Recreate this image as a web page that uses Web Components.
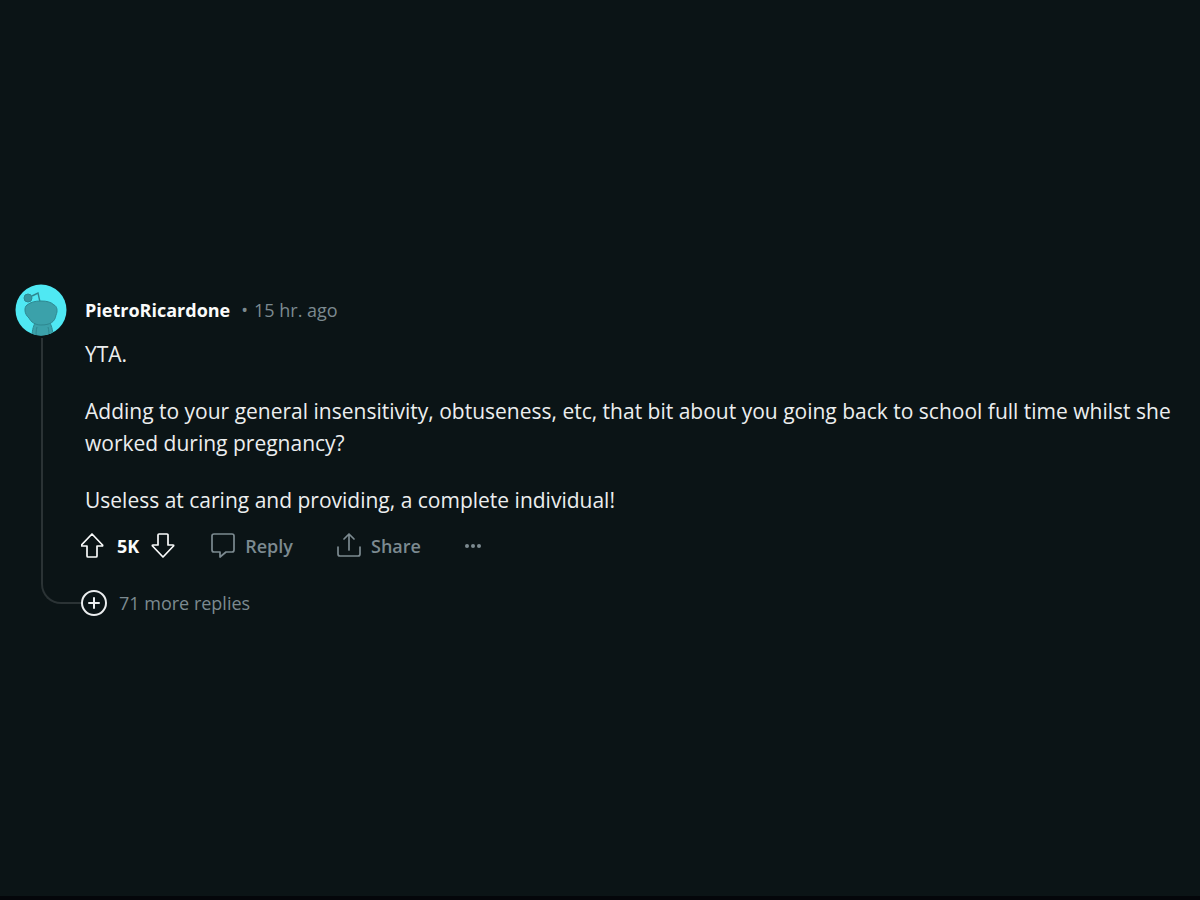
<!DOCTYPE html>
<html lang="en">
  <head>
    <meta charset="UTF-8" />
    <meta name="viewport" content="width=device-width, initial-scale=1.0" />
    <title>Comment thread</title>
    <style>
      :root {
        --color-bg: #0b1416;
        --color-text: #eceeef;
        --color-strong: #fafbfb;
        --color-muted: #7c8a90;
        --color-line: #2b3335;
      }
      body {
        margin: 0;
        background-color: var(--color-bg);
        color: var(--color-text);
        font-family: "Open Sans", "Noto Sans", sans-serif;
      }
    </style>
  </head>
  <body>
    <thread-page>
      <thread-comment author="PietroRicardone" time="15 hr. ago">
        <user-avatar slot="avatar"></user-avatar>
        <p>YTA.</p>
        <p>
          Adding to your general insensitivity, obtuseness, etc, that bit about
          you going back to school full time whilst she worked during pregnancy?
        </p>
        <p>Useless at caring and providing, a complete individual!</p>
        <comment-actions slot="actions" score="5K"></comment-actions>
        <more-replies slot="replies">71 more replies</more-replies>
      </thread-comment>
    </thread-page>

    <script>
      class ThreadPage extends HTMLElement {
        constructor() {
          super();
          this.attachShadow({ mode: "open" });
          this.shadowRoot.innerHTML = `
            <style>
              :host {
                display: flex;
                align-items: center;
                box-sizing: border-box;
                min-height: 100vh;
                padding: 4px 24px 0 15px;
                border-bottom: 4px solid #04060a;
              }
              main {
                flex: 1;
                min-width: 0;
              }
            </style>
            <main><slot></slot></main>
          `;
        }
      }

      class UserAvatar extends HTMLElement {
        constructor() {
          super();
          this.attachShadow({ mode: "open" });
          this.shadowRoot.innerHTML = `
            <style>
              :host {
                display: block;
                width: 52px;
                height: 52px;
              }
              svg {
                display: block;
              }
            </style>
            <svg width="52" height="52" viewBox="0 0 52 52" aria-hidden="true">
              <clipPath id="round"><circle cx="26" cy="26" r="25.5" /></clipPath>
              <g clip-path="url(#round)" stroke="#2f8790" stroke-width="1">
                <rect width="52" height="52" fill="#4fe8f3" stroke="none" />
                <path d="M20 39 C18 43 17 47 17 54 H38 C38 47 37 43 35 39 Z" fill="#3ba1aa" />
                <path d="M22 43 C21 46 21 50 21 54 M33 43 C34 46 34 50 34 54" fill="none" />
                <path d="M25 18 L23 9 L17 12" fill="none" stroke-width="1.4" />
                <circle cx="13" cy="14" r="4" fill="#3697a1" />
                <path d="M12 21 C16 18 20 17 26 17 C32 17 36 18 39 21 C42 22 43 27 41 31 C40 38 35 41 26 41 C20 41 16 38 14 34 C9 30 9 23 12 21 Z" fill="#3ba1aa" />
              </g>
            </svg>
          `;
        }
      }

      class ThreadComment extends HTMLElement {
        constructor() {
          super();
          this.attachShadow({ mode: "open" });
          this.shadowRoot.innerHTML = `
            <style>
              :host {
                display: block;
              }
              article {
                display: grid;
                grid-template-columns: 66px minmax(0, 1fr);
              }
              .side {
                display: flex;
                flex-direction: column;
              }
              /* the rail bends into the middle of the replies row */
              .rail {
                flex: 1;
                margin: 2px 0 12px 26px;
                border: solid var(--color-line);
                border-width: 0 0 2px 2px;
                border-bottom-left-radius: 20px;
              }
              header {
                display: flex;
                align-items: center;
                height: 52px;
                padding-left: 4px;
                font-size: 18px;
              }
              header a {
                color: var(--color-strong);
                font-weight: 700;
                text-decoration: none;
              }
              .dot {
                margin: 0 6px 0 11px;
              }
              .dot,
              time {
                color: var(--color-muted);
              }
              .text {
                display: grid;
                gap: 25px;
                margin: 2px 0 17px;
                padding-left: 4px;
                font-size: 21px;
                line-height: 32px;
              }
              ::slotted(p) {
                margin: 0;
              }
              ::slotted(more-replies) {
                margin-top: 31px;
              }
            </style>
            <article>
              <div class="side">
                <slot name="avatar"></slot>
                <div class="rail"></div>
              </div>
              <div>
                <header>
                  <a href="#"></a>
                  <span class="dot">•</span>
                  <time></time>
                </header>
                <div class="text"><slot></slot></div>
                <slot name="actions"></slot>
                <slot name="replies"></slot>
              </div>
            </article>
          `;
        }
        connectedCallback() {
          this.shadowRoot.querySelector("a").textContent =
            this.getAttribute("author");
          this.shadowRoot.querySelector("time").textContent =
            this.getAttribute("time");
        }
      }

      class CommentActions extends HTMLElement {
        constructor() {
          super();
          this.attachShadow({ mode: "open" });
          this.shadowRoot.innerHTML = `
            <style>
              :host {
                display: flex;
                align-items: center;
                height: 26px;
                color: var(--color-muted);
                font-size: 18px;
                font-weight: 600;
              }
              button {
                display: flex;
                align-items: center;
                gap: 10px;
                padding: 0;
                border: 0;
                background: none;
                color: inherit;
                font: inherit;
                line-height: 26px;
                cursor: pointer;
              }
              svg {
                display: block;
                fill: none;
                stroke: currentColor;
                stroke-width: 1.7;
                stroke-linejoin: round;
                stroke-linecap: round;
              }
              .votes {
                display: flex;
                align-items: center;
                gap: 12px;
                margin-right: 36px;
                color: var(--color-strong);
              }
              .score {
                font-weight: 700;
              }
              .share {
                margin: 0 44px;
              }
            </style>
            <div class="votes">
              <button type="button" aria-label="Upvote">
                <svg width="24" height="26" viewBox="0 0 24 26"><path d="M11 1 L21.5 12 Q22 13 21 13 H16 V23 Q16 24 15 24 H7 Q6 24 6 23 V13 H1 Q0 13 0.5 12 Z" /></svg>
              </button>
              <span class="score"></span>
              <button type="button" aria-label="Downvote">
                <svg width="24" height="26" viewBox="0 0 24 26"><path d="M12 24 L22.5 13 Q23 12 22 12 H17 V2 Q17 1 16 1 H8 Q7 1 7 2 V12 H2 Q1 12 1.5 13 Z" /></svg>
              </button>
            </div>
            <button type="button">
              <svg width="24" height="26" viewBox="0 0 24 26"><path d="M3 1 H21 Q23 1 23 3 V17 Q23 19 21 19 H15 L9 24 V19 H3 Q1 19 1 17 V3 Q1 1 3 1 Z" /></svg>
              Reply
            </button>
            <button type="button" class="share">
              <svg width="24" height="26" viewBox="0 0 24 26"><path d="M12 17 V1 M7 6 L12 1 L17 6 M1 14 V21 Q1 23 3 23 H21 Q23 23 23 21 V14" /></svg>
              Share
            </button>
            <button type="button" aria-label="More options">
              <svg width="18" height="26" viewBox="0 0 18 26"><g fill="currentColor" stroke="none"><circle cx="2" cy="13" r="2" /><circle cx="8" cy="13" r="2" /><circle cx="14" cy="13" r="2" /></g></svg>
            </button>
          `;
        }
        connectedCallback() {
          this.shadowRoot.querySelector(".score").textContent =
            this.getAttribute("score");
        }
      }

      class MoreReplies extends HTMLElement {
        constructor() {
          super();
          this.attachShadow({ mode: "open" });
          this.shadowRoot.innerHTML = `
            <style>
              :host {
                display: flex;
              }
              button {
                display: flex;
                align-items: center;
                gap: 12px;
                padding: 0;
                border: 0;
                background: none;
                color: var(--color-muted);
                font: inherit;
                font-size: 18px;
                line-height: 26px;
                cursor: pointer;
              }
              svg {
                display: block;
                fill: none;
                stroke: var(--color-text);
                stroke-width: 2;
                stroke-linecap: round;
              }
            </style>
            <button type="button">
              <svg width="26" height="26" viewBox="0 0 26 26" aria-hidden="true"><circle cx="13" cy="13" r="12" /><path d="M13 8 V18 M8 13 H18" /></svg>
              <slot></slot>
            </button>
          `;
        }
      }

      customElements.define("thread-page", ThreadPage);
      customElements.define("user-avatar", UserAvatar);
      customElements.define("thread-comment", ThreadComment);
      customElements.define("comment-actions", CommentActions);
      customElements.define("more-replies", MoreReplies);
    </script>
  </body>
</html>
